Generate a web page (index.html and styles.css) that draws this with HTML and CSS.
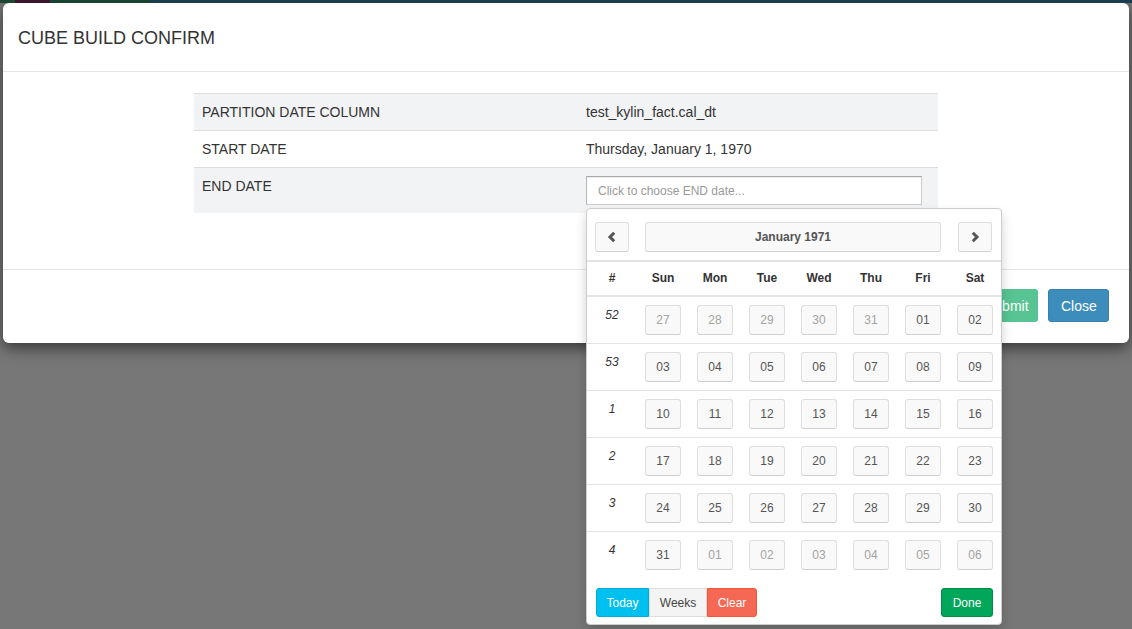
FILE: index.html
```html
<!DOCTYPE html>
<html>
<head>
<meta charset="utf-8">
<title>Cube Build Confirm</title>
<link rel="stylesheet" href="styles.css">
</head>
<body>
<div class="page-strip">
  <span class="s1"></span><span class="s2"></span><span class="s3"></span><span class="s4"></span>
</div>
<div class="modal">
  <div class="modal-header"><h4 class="modal-title">CUBE BUILD CONFIRM</h4></div>
  <div class="modal-body">
    <table class="info-table">
      <tr class="odd"><td class="label">PARTITION DATE COLUMN</td><td>test_kylin_fact.cal_dt</td></tr>
      <tr><td class="label">START DATE</td><td>Thursday, January 1, 1970</td></tr>
      <tr class="odd">
        <td class="label">END DATE</td>
        <td>
          <div class="picker-wrap">
            <input class="date-input" type="text" placeholder="Click to choose END date...">
            <div class="datepicker">
              <div class="dp-grid dp-head">
                <div class="cell"><button class="dp-btn nav"><svg width="10" height="12" viewBox="0 0 10 12"><path d="M7.2 1.8 L3 6 L7.2 10.2" fill="none" stroke="#555" stroke-width="3" stroke-linejoin="miter"/></svg></button></div>
                <div class="cell title-cell"><button class="dp-btn title">January 1971</button></div>
                <div class="cell"><button class="dp-btn nav"><svg width="10" height="12" viewBox="0 0 10 12"><path d="M2.8 1.8 L7 6 L2.8 10.2" fill="none" stroke="#555" stroke-width="3" stroke-linejoin="miter"/></svg></button></div>
              </div>
              <div class="dp-grid dp-days">
                <div>#</div><div>Sun</div><div>Mon</div><div>Tue</div><div>Wed</div><div>Thu</div><div>Fri</div><div>Sat</div>
              </div>
              <div class="dp-grid dp-week">
                <div class="wk">52</div>
                <div class="cell"><span class="day muted">27</span></div><div class="cell"><span class="day muted">28</span></div><div class="cell"><span class="day muted">29</span></div><div class="cell"><span class="day muted">30</span></div><div class="cell"><span class="day muted">31</span></div><div class="cell"><span class="day">01</span></div><div class="cell"><span class="day">02</span></div>
              </div>
              <div class="dp-grid dp-week">
                <div class="wk">53</div>
                <div class="cell"><span class="day">03</span></div><div class="cell"><span class="day">04</span></div><div class="cell"><span class="day">05</span></div><div class="cell"><span class="day">06</span></div><div class="cell"><span class="day">07</span></div><div class="cell"><span class="day">08</span></div><div class="cell"><span class="day">09</span></div>
              </div>
              <div class="dp-grid dp-week">
                <div class="wk">1</div>
                <div class="cell"><span class="day">10</span></div><div class="cell"><span class="day">11</span></div><div class="cell"><span class="day">12</span></div><div class="cell"><span class="day">13</span></div><div class="cell"><span class="day">14</span></div><div class="cell"><span class="day">15</span></div><div class="cell"><span class="day">16</span></div>
              </div>
              <div class="dp-grid dp-week">
                <div class="wk">2</div>
                <div class="cell"><span class="day">17</span></div><div class="cell"><span class="day">18</span></div><div class="cell"><span class="day">19</span></div><div class="cell"><span class="day">20</span></div><div class="cell"><span class="day">21</span></div><div class="cell"><span class="day">22</span></div><div class="cell"><span class="day">23</span></div>
              </div>
              <div class="dp-grid dp-week">
                <div class="wk">3</div>
                <div class="cell"><span class="day">24</span></div><div class="cell"><span class="day">25</span></div><div class="cell"><span class="day">26</span></div><div class="cell"><span class="day">27</span></div><div class="cell"><span class="day">28</span></div><div class="cell"><span class="day">29</span></div><div class="cell"><span class="day">30</span></div>
              </div>
              <div class="dp-grid dp-week last">
                <div class="wk">4</div>
                <div class="cell"><span class="day">31</span></div><div class="cell"><span class="day muted">01</span></div><div class="cell"><span class="day muted">02</span></div><div class="cell"><span class="day muted">03</span></div><div class="cell"><span class="day muted">04</span></div><div class="cell"><span class="day muted">05</span></div><div class="cell"><span class="day muted">06</span></div>
              </div>
              <div class="dp-foot">
                <div class="btn-group">
                  <button class="sbtn today">Today</button><button class="sbtn weeks">Weeks</button><button class="sbtn clear">Clear</button>
                </div>
                <button class="sbtn done">Done</button>
              </div>
            </div>
          </div>
        </td>
      </tr>
    </table>
  </div>
  <div class="modal-footer">
    <button class="btn submit">Submit</button>
    <button class="btn close">Close</button>
  </div>
</div>
</body>
</html>
```

FILE: styles.css
```css
* { box-sizing: border-box; }
html, body { margin: 0; padding: 0; }
body {
  background: #777777;
  font-family: "Liberation Sans", Arial, sans-serif;
  color: #333;
  height: 629px;
  overflow: hidden;
}
.page-strip { display: flex; height: 3px; }
.page-strip span { display: block; height: 3px; }
.page-strip .s1 { width: 15px; background: #1c4735; }
.page-strip .s2 { width: 35px; background: #3b1530; }
.page-strip .s3 { width: 100px; background: #174330; }
.page-strip .s4 { flex: 1; background: #1b3d50; }

.modal {
  margin: 0 3px;
  background: #fff;
  border-radius: 6px;
  box-shadow: 0 5px 15px rgba(0,0,0,0.55);
  height: 340px;
}
.modal-header {
  height: 69px;
  border-bottom: 1px solid #e5e5e5;
  display: flex;
  align-items: center;
  padding: 0 15px 0 15px;
}
.modal-title {
  margin: 0;
  font-size: 18px;
  font-weight: normal;
  color: #333;
  padding-top: 2px;
}
.modal-body {
  height: 197px;
  padding: 21px 0 0;
}
.info-table {
  width: 744px;
  margin: 0 auto;
  border-collapse: collapse;
  font-size: 14px;
  color: #333;
}
.info-table td {
  border-top: 1px solid #ddd;
  padding: 8px;
  line-height: 20px;
  vertical-align: top;
}
.info-table td.label { width: 384px; }
.info-table tr.odd td { background: #f2f3f5; }

.picker-wrap { position: relative; }
.date-input {
  display: block;
  width: 336px;
  height: 29px;
  border: 1px solid #ccc;
  border-top-color: #a9a9a9;
  border-left-color: #b5b5b5;
  box-shadow: inset 0 1px 1px rgba(0,0,0,0.075);
  padding: 0 11px;
  font-family: "Liberation Sans", Arial, sans-serif;
  font-size: 12px;
  background: #fff;
  margin: 0;
}
.date-input::placeholder { color: #999; }

.datepicker {
  position: absolute;
  top: 32px;
  left: 0;
  width: 416px;
  background: #fff;
  border: 1px solid #ccc;
  border-radius: 4px;
  box-shadow: 0 6px 12px rgba(0,0,0,0.175);
  z-index: 10;
  font-size: 12px;
  line-height: 16px;
}
.dp-grid {
  display: grid;
  grid-template-columns: 50px repeat(7, 52px);
}
.dp-head {
  padding: 13px 0 8px;
  border-bottom: 2px solid #e3e3e3;
}
.dp-head .cell { display: flex; justify-content: center; }
.dp-head .title-cell { grid-column: span 6; padding: 0 8px; }
.dp-btn {
  height: 30px;
  background: #f9f9f9;
  border: 1px solid #ddd;
  border-bottom-color: #d2d2d2;
  border-radius: 3px;
  font-family: "Liberation Sans", Arial, sans-serif;
  color: #555;
  padding: 0;
  margin: 0;
  display: flex;
  align-items: center;
  justify-content: center;
}
.dp-btn.nav { width: 34px; }
.dp-btn.title { width: 100%; font-size: 12px; font-weight: bold; }

.dp-days {
  height: 35px;
  border-bottom: 2px solid #e3e3e3;
  align-items: center;
  font-weight: bold;
  color: #333;
  text-align: center;
  padding-bottom: 1px;
}
.dp-week {
  height: 47px;
  border-bottom: 1px solid #e3e3e3;
  padding-top: 8px;
}
.dp-week.last { border-bottom: none; height: 46px; }
.dp-week .wk {
  font-style: italic;
  text-align: center;
  padding-top: 2px;
  color: #333;
}
.dp-week .cell { display: flex; justify-content: center; }
.day {
  width: 36px;
  height: 30px;
  display: flex;
  align-items: center;
  justify-content: center;
  background: #f9f9f9;
  border: 1px solid #ddd;
  border-bottom-color: #cfcfcf;
  border-radius: 3px;
  color: #555;
}
.day.muted { color: #a3a3a3; }

.dp-foot {
  display: flex;
  justify-content: space-between;
  padding: 10px 8px 7px 9px;
}
.btn-group { display: flex; }
.sbtn {
  height: 29px;
  border: 1px solid transparent;
  font-family: "Liberation Sans", Arial, sans-serif;
  font-size: 12px;
  color: #fff;
  margin: 0;
  padding: 0;
  border-radius: 3px;
}
.sbtn.today { width: 53px; background: #00c0ef; border-color: #00acd6; border-radius: 3px 0 0 3px; }
.sbtn.weeks { width: 58px; background: #f4f4f4; border-color: #ddd; color: #444; border-radius: 0; }
.sbtn.clear { width: 50px; background: #f56954; border-color: #f4543c; border-radius: 0 3px 3px 0; }
.sbtn.done { width: 52px; background: #00a65a; border-color: #008d4c; }

.modal-footer {
  border-top: 1px solid #e5e5e5;
  padding: 19px 20px 0;
  display: flex;
  justify-content: flex-end;
  gap: 10px;
}
.btn {
  height: 33px;
  font-family: "Liberation Sans", Arial, sans-serif;
  font-size: 14px;
  color: #fff;
  border: 1px solid transparent;
  border-radius: 3px;
  padding: 0 12px;
  margin: 0;
}
.btn.submit { background: #00a65a; opacity: 0.65; width: 66px; }
.btn.close { background: #3c8dbc; border-color: #367fa9; width: 61px; }
```
